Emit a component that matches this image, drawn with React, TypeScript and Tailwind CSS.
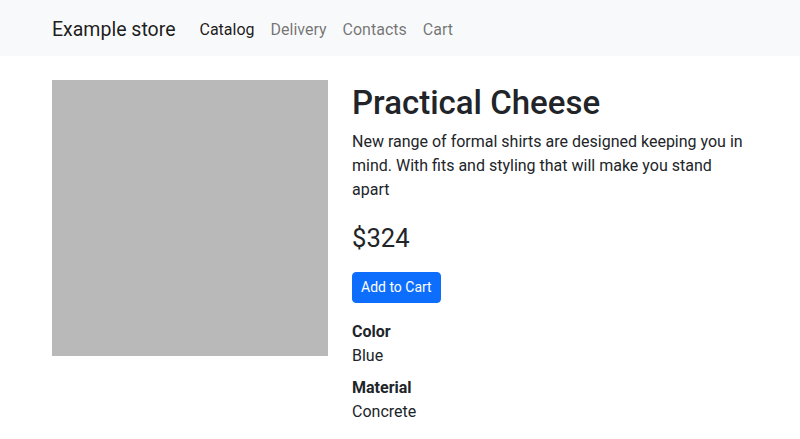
export default function App() {
  return (
    <div className="min-h-screen bg-white text-[#212529] font-['Roboto',sans-serif]">
      <nav className="bg-[#f8f9fa] h-[56px]">
        <div className="mx-auto w-[720px] px-3 pt-[3px] h-full flex items-center">
          <a className="text-[19.5px] leading-[30px] text-black/90 mr-4 py-[5px]">Example store</a>
          <ul className="flex text-[16px] leading-6">
            <li className="px-2 text-black/90">Catalog</li>
            <li className="px-2 text-black/55">Delivery</li>
            <li className="px-2 text-black/55">Contacts</li>
            <li className="px-2 text-black/55">Cart</li>
          </ul>
        </div>
      </nav>
      <div className="mx-auto w-[720px] px-3 mt-6">
        <div className="flex gap-6">
          <div className="w-[276px] h-[276px] bg-[#b9b9b9] shrink-0" />
          <div className="w-[396px] flex flex-col items-start">
            <h1 className="text-[33px] leading-[46px] font-medium mb-[4px]">Practical Cheese</h1>
            <p className="text-[16px] leading-6 mb-[21px]">
              New range of formal shirts are designed keeping you in mind. With fits and styling that will make you stand apart
            </p>
            <div className="text-[25.6px] leading-[31px] mb-[18px]">$324</div>
            <button className="bg-[#0d6efd] border border-[#0d6efd] text-white text-[14px] leading-[21px] px-2 py-1 rounded-[4px] mb-[17px]">Add to Cart</button>
            <dl className="text-[16px] leading-6">
              <dt className="font-bold">Color</dt>
              <dd className="mb-2">Blue</dd>
              <dt className="font-bold">Material</dt>
              <dd className="mb-2">Concrete</dd>
            </dl>
          </div>
        </div>
      </div>
    </div>
  );
}
